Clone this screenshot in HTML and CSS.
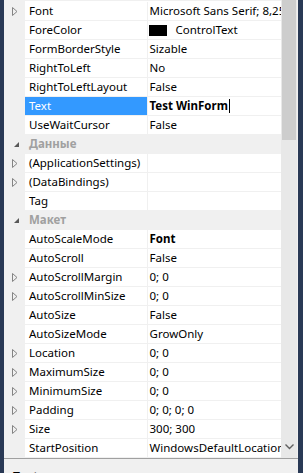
FILE: index.html
```html
<!DOCTYPE html>
<html lang="ru">
<head>
    <meta charset="UTF-8">
    <title>Properties</title>
    <link rel="stylesheet" href="styles.css">
</head>
<body>

<div class="window">
    <div class="edge left"></div>

    <div class="panel">
        <div class="view">
            <div class="grid">
                <div class="row"><span class="gutter"><svg class="expand" width="6" height="9"><path d="M0.5 0.5 L5 4.5 L0.5 8.5 Z" /></svg></span><span class="name">Font</span><span class="value">Microsoft Sans Serif; 8,25pt</span></div>
                <div class="row"><span class="gutter"></span><span class="name">ForeColor</span><span class="value"><i class="swatch"></i>ControlText</span></div>
                <div class="row"><span class="gutter"></span><span class="name">FormBorderStyle</span><span class="value">Sizable</span></div>
                <div class="row"><span class="gutter"></span><span class="name">RightToLeft</span><span class="value">No</span></div>
                <div class="row"><span class="gutter"></span><span class="name">RightToLeftLayout</span><span class="value">False</span></div>
                <div class="row selected"><span class="gutter"></span><span class="name">Text</span><span class="value bold">Test WinForm<i class="caret"></i></span></div>
                <div class="row"><span class="gutter"></span><span class="name">UseWaitCursor</span><span class="value">False</span></div>

                <div class="category"><span class="gutter"><svg class="open" width="5" height="5"><path d="M5 0 L5 5 L0 5 Z" /></svg></span><span class="title">Данные</span></div>
                <div class="row"><span class="gutter"><svg class="expand" width="6" height="9"><path d="M0.5 0.5 L5 4.5 L0.5 8.5 Z" /></svg></span><span class="name">(ApplicationSettings)</span><span class="value"></span></div>
                <div class="row"><span class="gutter"><svg class="expand" width="6" height="9"><path d="M0.5 0.5 L5 4.5 L0.5 8.5 Z" /></svg></span><span class="name">(DataBindings)</span><span class="value"></span></div>
                <div class="row"><span class="gutter"></span><span class="name">Tag</span><span class="value"></span></div>

                <div class="category"><span class="gutter"><svg class="open" width="5" height="5"><path d="M5 0 L5 5 L0 5 Z" /></svg></span><span class="title">Макет</span></div>
                <div class="row"><span class="gutter"></span><span class="name">AutoScaleMode</span><span class="value bold">Font</span></div>
                <div class="row"><span class="gutter"></span><span class="name">AutoScroll</span><span class="value">False</span></div>
                <div class="row"><span class="gutter"><svg class="expand" width="6" height="9"><path d="M0.5 0.5 L5 4.5 L0.5 8.5 Z" /></svg></span><span class="name">AutoScrollMargin</span><span class="value">0; 0</span></div>
                <div class="row"><span class="gutter"><svg class="expand" width="6" height="9"><path d="M0.5 0.5 L5 4.5 L0.5 8.5 Z" /></svg></span><span class="name">AutoScrollMinSize</span><span class="value">0; 0</span></div>
                <div class="row"><span class="gutter"></span><span class="name">AutoSize</span><span class="value">False</span></div>
                <div class="row"><span class="gutter"></span><span class="name">AutoSizeMode</span><span class="value">GrowOnly</span></div>
                <div class="row"><span class="gutter"><svg class="expand" width="6" height="9"><path d="M0.5 0.5 L5 4.5 L0.5 8.5 Z" /></svg></span><span class="name">Location</span><span class="value">0; 0</span></div>
                <div class="row"><span class="gutter"><svg class="expand" width="6" height="9"><path d="M0.5 0.5 L5 4.5 L0.5 8.5 Z" /></svg></span><span class="name">MaximumSize</span><span class="value">0; 0</span></div>
                <div class="row"><span class="gutter"><svg class="expand" width="6" height="9"><path d="M0.5 0.5 L5 4.5 L0.5 8.5 Z" /></svg></span><span class="name">MinimumSize</span><span class="value">0; 0</span></div>
                <div class="row"><span class="gutter"><svg class="expand" width="6" height="9"><path d="M0.5 0.5 L5 4.5 L0.5 8.5 Z" /></svg></span><span class="name">Padding</span><span class="value">0; 0; 0; 0</span></div>
                <div class="row"><span class="gutter"><svg class="expand" width="6" height="9"><path d="M0.5 0.5 L5 4.5 L0.5 8.5 Z" /></svg></span><span class="name">Size</span><span class="value">300; 300</span></div>
                <div class="row"><span class="gutter"></span><span class="name">StartPosition</span><span class="value">WindowsDefaultLocation</span></div>
            </div>

            <div class="scrollbar">
                <div class="thumb"></div>
                <div class="track"></div>
                <svg class="down" width="9" height="6"><path d="M0.5 0.5 L4.5 4.5 L8.5 0.5" /></svg>
            </div>
        </div>

        <!-- description pane, mostly scrolled out of view -->
        <div class="desc"><b>Text</b></div>
    </div>

    <div class="edge right"></div>
</div>

</body>
</html>
```

FILE: styles.css
```css
body {
    margin: 0;
    padding: 0;
    background-color: #293955;
    font-family: "Segoe UI", "Noto Sans", "Open Sans", sans-serif;
    font-size: 11.5px;
    color: #000;
    overflow: hidden;
}
.window {
    display: flex;
    height: 473px;
    overflow: hidden;
}
.edge {
    background-color: #293955;
}
.edge.left {
    width: 4px;
}
.edge.right {
    width: 5px;
}
.panel {
    flex: 1;
    display: flex;
    flex-direction: column;
    background-color: #f0f0f0;
}
.view {
    display: flex;
    height: 459px;
}
.grid {
    width: 277px;
    padding-top: 1px;
    border-top: 1px solid #f0f0f0;
    background: linear-gradient(to right, #f0f0f0 21px, #fff 21px);
}
.row, .category {
    display: flex;
    height: 18px;
    border-bottom: 1px solid #f0f0f0;
    line-height: 18px;
    white-space: nowrap;
}
.gutter {
    width: 21px;
    flex-shrink: 0;
    display: flex;
    align-items: center;
    background-color: #f0f0f0;
}
.expand {
    margin-left: 8px;
}
.expand path {
    fill: none;
    stroke: #848484;
}
.open {
    margin-left: 10px;
    margin-top: 1px;
}
.open path {
    fill: #595959;
}
.name {
    width: 118px;
    padding-left: 4px;
    border-right: 1px solid #f0f0f0;
    background-color: #fff;
    overflow: hidden;
}
.value {
    width: 132px;
    padding-left: 2px;
    background-color: #fff;
    overflow: hidden;
    display: flex;
    align-items: center;
}
.value.bold {
    font-weight: bold;
}
.selected .name {
    background-color: #3399ff;
    color: #fff;
}
.swatch {
    display: inline-block;
    flex-shrink: 0;
    width: 18px;
    height: 11px;
    margin-left: -1px;
    margin-right: 9px;
    background-color: #000;
}
.caret {
    display: inline-block;
    width: 1px;
    height: 14px;
    margin-left: 1px;
    background-color: #000;
}
.category {
    background-color: #f0f0f0;
}
.category .title {
    padding-left: 4px;
    font-weight: bold;
    color: #a0a0a0;
}
.scrollbar {
    width: 16px;
    display: flex;
    flex-direction: column;
    align-items: center;
    background-color: #e8e8e8;
}
.thumb {
    width: 14px;
    height: 140px;
    background-color: #cdcdcd;
}
.track {
    flex: 1;
}
.down {
    margin-bottom: 8px;
}
.down path {
    fill: none;
    stroke: #606060;
    stroke-width: 1.4;
}
.desc {
    flex: 1;
    border-top: 1px solid #a0a0a0;
    padding: 11px 0 0 9px;
    line-height: 14px;
    font-size: 12px;
}
```
